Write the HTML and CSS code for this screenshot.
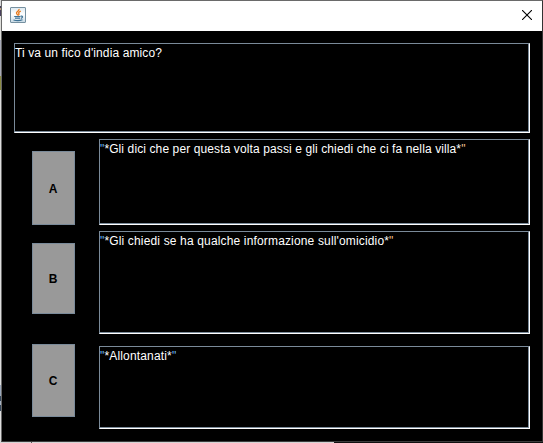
FILE: index.html
```
<!DOCTYPE html>
<html lang="it">
<head>
<meta charset="utf-8">
<title>Dialogo</title>
<link rel="stylesheet" href="styles.css">
</head>
<body>
<div class="desktop">
  <div class="edge edge-left"></div>
  <main class="window">
    <header class="titlebar">
      <svg class="java" width="16" height="16" viewBox="0 0 16 16">
        <defs><linearGradient id="tile" x2="0" y2="1"><stop offset="0" stop-color="#dce8ef"/><stop offset=".45" stop-color="#fff"/><stop offset="1" stop-color="#c5d8e4"/></linearGradient></defs>
        <rect x=".5" y=".5" width="15" height="15" rx=".5" fill="url(#tile)" stroke="#7690a0"/>
        <path d="M9 2C9.6 4 6.4 4.3 6.5 6C6.6 7 7.6 7.5 7.8 8.3M10.8 4.2C8.7 5 8.3 5.8 8.9 6.7C9.3 7.4 8.8 8 8.3 8.4" fill="none" stroke="#e87a1c" stroke-width="1.4"/>
        <path d="M4.2 9.5H10.5M5 11.2H10M10.8 9.2C13.4 8.5 12.8 10.9 10.8 11.4M3.5 13C6 13.7 10 13.7 12.5 12.8" fill="none" stroke="#3f7396" stroke-width="1.2"/>
      </svg>
      <svg class="close" width="10" height="10" viewBox="0 0 10 10"><path d="M0 0L10 10M10 0L0 10" stroke="#000" stroke-width="1.1"/></svg>
    </header>
    <section class="content">
      <div class="pane question"><span>Ti va un fico d'india amico?</span></div>
      <div class="row row-a"><button>A</button><div class="pane"><span><i class="open">"</i>*Gli dici che per questa volta passi e gli chiedi che ci fa nella villa*<i class="end">"</i></span></div></div>
      <div class="row row-b"><button>B</button><div class="pane"><span><i class="open">"</i>*Gli chiedi se ha qualche informazione sull'omicidio*<i class="end">"</i></span></div></div>
      <div class="row row-c"><button>C</button><div class="pane"><span><i class="open">"</i>*Allontanati*<i class="open">"</i></span></div></div>
    </section>
  </main>
  <div class="edge edge-bottom"></div>
</div>
</body>
</html>
```
FILE: styles.css
```
* { box-sizing: border-box; }
body { margin: 0; overflow: hidden; font: 12px/14px "Liberation Sans", Arial, sans-serif; }
.desktop {
  width: 543px; height: 443px;
  display: grid;
  grid-template: 442px 1px / 1px 542px;
}
.edge-left { background: linear-gradient(#d8d8d8 6px, #49405c 6px 8px, #b49b7c 8px 10px, #49405c 10px 16px, #e0e0dc 16px 40px, #a9abb8 40px 76px, #8b8b43 76px 90px, #dedede 90px 385px, #9ba8bb 385px 396px, #35475b 396px 401px, #a9b4c4 401px 405px, #35475b 405px 411px, #dedede 411px); }
.edge-bottom { grid-column: 1 / 3; background: linear-gradient(90deg, #d4d4d4 31px, #555 31px 32px, #d4d4d4 32px 334px, #111 334px); }
.window {
  display: flex; flex-direction: column;
  border: 1px solid #6a6a6a;
  border-right-color: #333;
  border-bottom-color: #3c3c3c;
  background: #000;
}
.titlebar {
  height: 30px; flex: none;
  display: flex; justify-content: space-between;
  padding: 6px 10px 0 8px;
  background: #fff;
}
.close { margin-top: 3px; }
.content { padding: 12px 12px 0; }
.pane {
  flex: 1;
  border: 1px solid #7a8a99;
  border-right-color: #fff;
  border-bottom-color: #fff;
  box-shadow: inset -1px -1px #7a8a99;
  padding: 2px 0 0;
  color: #fff;
  white-space: nowrap;
  letter-spacing: .11px;
}
.question { height: 90px; margin-bottom: 6px; }
.row { display: flex; padding-left: 18px; gap: 24px; }
button {
  width: 43px;
  padding: 1px 1px 0 0;
  border: 1px solid #7a8a99;
  background: #999;
  color: #000;
  font: bold 12px "Liberation Sans", Arial, sans-serif;
}
.row-a { height: 86px; margin-bottom: 6px; }
.row-a button { margin-top: 12px; }
.row-b { height: 103px; margin-bottom: 10px; }
.row-b .pane { letter-spacing: .155px; }
.row-b button { height: 71px; margin-top: 12px; }
.row-c { height: 85px; }
.row-c .pane { margin-top: 2px; letter-spacing: .16px; }
.row-c button { height: 73px; }
i { font-style: normal; }
.open { color: #6ab8f5; }
.end { color: #f0c090; }
```
